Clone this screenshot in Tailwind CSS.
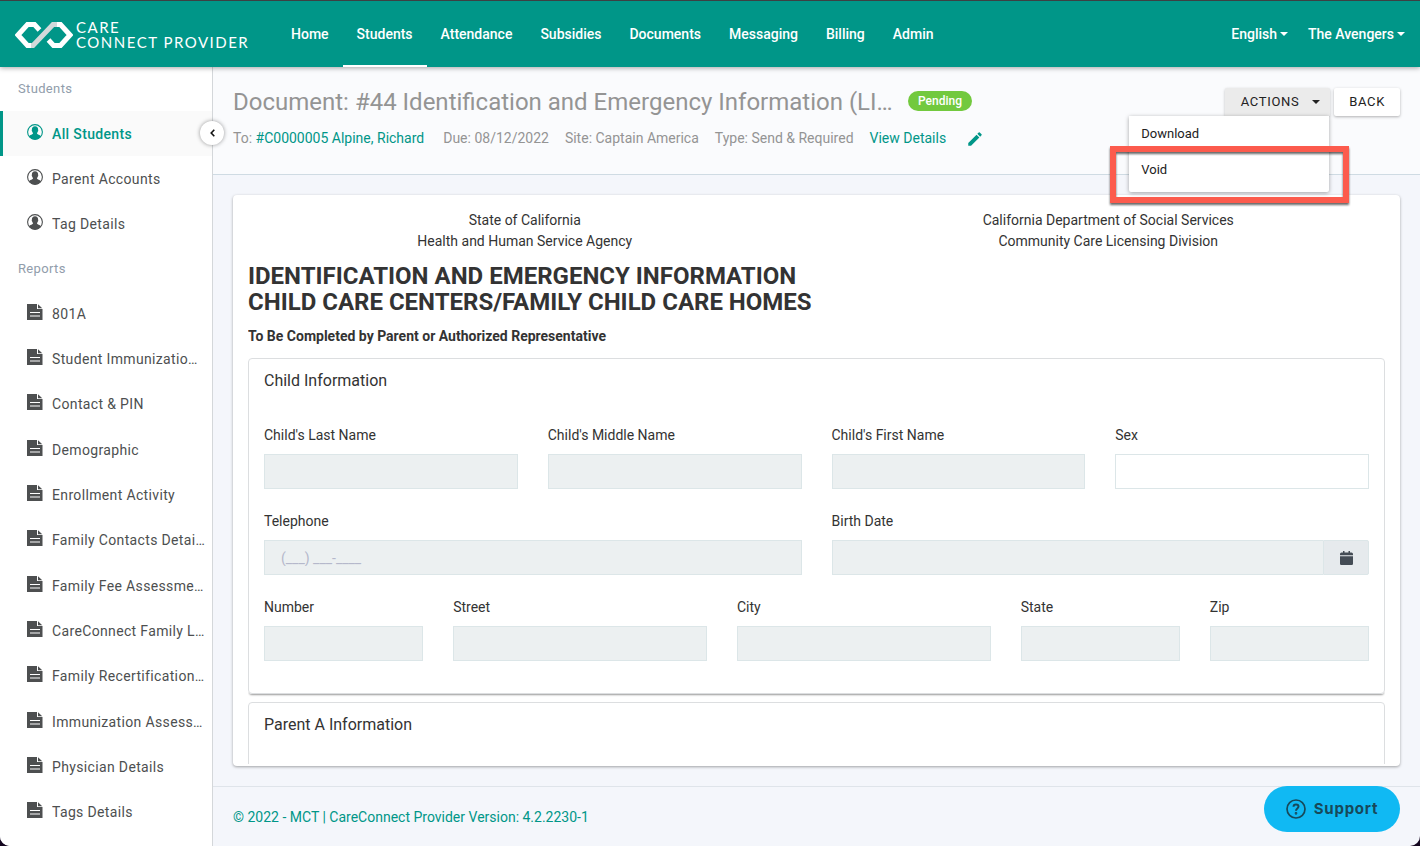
<!DOCTYPE html>
<html lang="en">
<head>
    <meta charset="UTF-8">
    <meta name="viewport" content="width=device-width, initial-scale=1.0">
    <title>CareConnect Provider - Document #44</title>
    <script src="https://cdn.jsdelivr.net/npm/@tailwindcss/browser@4"></script>
</head>
<body class="bg-[#14061f] font-[Roboto,sans-serif] text-sm text-[#333]">
    <svg class="hidden">
        <symbol id="icon-user" viewBox="0 0 16 16">
            <circle cx="8" cy="8" r="7.4" fill="none" stroke="currentColor" stroke-width="1.1"/>
            <path fill="currentColor" d="M8 2.2c2.100 0 3.200 1.400 3.100 3.200 0 .5.3.6.1 1.300-.1.6-.5.8-.6 1.200-.2.7-.6.9-.6 1.400 0 1.400 3.200 1.300 4.200 3.300A7.400 7.400 0 0 1 8 15.500a7.400 7.400 0 0 1-6.200-2.900C2.800 10.600 6 10.700 6 9.300c0-.5-.4-.7-.6-1.400-.1-.4-.5-.6-.6-1.200-.2-.7.100-.8.100-1.300-.1-1.800 1-3.200 3.100-3.200z"/>
        </symbol>
        <symbol id="icon-doc" viewBox="0 0 16 16">
            <path fill="currentColor" fill-rule="evenodd" d="M0 0H10v5h5.500v11H0zM3 8v1h10V8zm0 3.500v1h10v-1z"/>
            <path fill="currentColor" d="M11 .2 15.300 4.200H11z"/>
        </symbol>
        <symbol id="icon-caret" viewBox="0 0 8 4">
            <path fill="currentColor" d="M0 0h8L4 4z"/>
        </symbol>
    </svg>

    <div class="flex h-screen flex-col overflow-hidden rounded-b-[10px] bg-[#f4f6fb]">
        <!-- top bar -->
        <header class="relative z-10 flex h-[67px] shrink-0 items-stretch border-t border-[#3c4043] bg-[#009688] pr-[15px] pl-[15px] text-white shadow-[0_1px_5px_rgba(0,0,0,0.35)]">
            <a href="#" class="flex w-[262px] items-center gap-[3px] pt-[2px]" aria-label="Care Connect Provider">
                <svg class="h-[26px] w-[58px]" viewBox="0 0 58 26" fill="none" stroke-width="5">
                    <path stroke="#d2d9da" d="M14 23.500h4L38 2.500h5"/>
                    <path stroke="#fff" d="M24.500 8 19.500 2.500h-7L3 13l9.500 10.500H16"/>
                    <path stroke="#fff" d="M33.500 18l5 5.500h7L55 13 45.500 2.500H42"/>
                </svg>
                <span class="font-[Lato,sans-serif] text-[15px] leading-[15px] whitespace-nowrap tracking-widest">CARE<br>CONNECT PROVIDER</span>
            </a>
            <nav class="flex font-medium">
                <a href="#" class="flex items-center px-[14px]">Home</a>
                <a href="#" class="flex items-center border-y-2 border-t-transparent border-b-white px-[14px]">Students</a>
                <a href="#" class="flex items-center px-[14px]">Attendance</a>
                <a href="#" class="flex items-center px-[14px]">Subsidies</a>
                <a href="#" class="flex items-center px-[14px]">Documents</a>
                <a href="#" class="flex items-center px-[14px]">Messaging</a>
                <a href="#" class="flex items-center px-[14px]">Billing</a>
                <a href="#" class="flex items-center px-[14px]">Admin</a>
            </nav>
            <div class="ml-auto flex gap-5 font-medium">
                <button type="button" class="flex items-center gap-[3px]">English <svg class="h-1 w-2"><use href="#icon-caret"/></svg></button>
                <button type="button" class="flex items-center gap-[3px]">The Avengers <svg class="h-1 w-2"><use href="#icon-caret"/></svg></button>
            </div>
        </header>

        <div class="flex min-h-0 flex-1">
            <!-- sidebar -->
            <aside class="relative w-[213px] shrink-0 border-r border-[#d4d7da] bg-white">
                <nav class="flex h-full flex-col pb-[11px] tracking-wide text-[#4d4f50]">
                    <h2 class="flex h-11 shrink-0 items-center pl-[18px] text-[13px] text-[#919dab]">Students</h2>
                    <ul class="flex flex-[3] flex-col">
                        <li class="flex flex-1"><a href="#" class="flex min-w-0 flex-1 items-center gap-[9px] border-l-3 border-[#009688] bg-[#fafafa] pr-[7px] pl-6 font-medium text-[#009688]"><svg class="mb-1 size-4 shrink-0"><use href="#icon-user"/></svg><span class="truncate">All Students</span></a></li>
                        <li class="flex flex-1"><a href="#" class="flex min-w-0 flex-1 items-center gap-[9px] pr-[7px] pl-[27px]"><svg class="mb-1 size-4 shrink-0"><use href="#icon-user"/></svg><span class="truncate">Parent Accounts</span></a></li>
                        <li class="flex flex-1"><a href="#" class="flex min-w-0 flex-1 items-center gap-[9px] pr-[7px] pl-[27px]"><svg class="mb-1 size-4 shrink-0"><use href="#icon-user"/></svg><span class="truncate">Tag Details</span></a></li>
                    </ul>
                    <h2 class="flex h-11 shrink-0 items-center pl-[18px] text-[13px] text-[#919dab]">Reports</h2>
                    <ul class="flex flex-[12] flex-col">
                        <li class="flex flex-1"><a href="#" class="flex min-w-0 flex-1 items-center gap-[9px] pr-[7px] pl-[27px]"><svg class="mb-1 size-4 shrink-0"><use href="#icon-doc"/></svg><span class="truncate">801A</span></a></li>
                        <li class="flex flex-1"><a href="#" class="flex min-w-0 flex-1 items-center gap-[9px] pr-[7px] pl-[27px]"><svg class="mb-1 size-4 shrink-0"><use href="#icon-doc"/></svg><span class="truncate">Student Immunization Records</span></a></li>
                        <li class="flex flex-1"><a href="#" class="flex min-w-0 flex-1 items-center gap-[9px] pr-[7px] pl-[27px]"><svg class="mb-1 size-4 shrink-0"><use href="#icon-doc"/></svg><span class="truncate">Contact &amp; PIN</span></a></li>
                        <li class="flex flex-1"><a href="#" class="flex min-w-0 flex-1 items-center gap-[9px] pr-[7px] pl-[27px]"><svg class="mb-1 size-4 shrink-0"><use href="#icon-doc"/></svg><span class="truncate">Demographic</span></a></li>
                        <li class="flex flex-1"><a href="#" class="flex min-w-0 flex-1 items-center gap-[9px] pr-[7px] pl-[27px]"><svg class="mb-1 size-4 shrink-0"><use href="#icon-doc"/></svg><span class="truncate">Enrollment Activity</span></a></li>
                        <li class="flex flex-1"><a href="#" class="flex min-w-0 flex-1 items-center gap-[9px] pr-[7px] pl-[27px]"><svg class="mb-1 size-4 shrink-0"><use href="#icon-doc"/></svg><span class="truncate">Family Contacts Details Report</span></a></li>
                        <li class="flex flex-1"><a href="#" class="flex min-w-0 flex-1 items-center gap-[9px] pr-[7px] pl-[27px]"><svg class="mb-1 size-4 shrink-0"><use href="#icon-doc"/></svg><span class="truncate">Family Fee Assessment</span></a></li>
                        <li class="flex flex-1"><a href="#" class="flex min-w-0 flex-1 items-center gap-[9px] pr-[7px] pl-[27px]"><svg class="mb-1 size-4 shrink-0"><use href="#icon-doc"/></svg><span class="truncate">CareConnect Family Logins</span></a></li>
                        <li class="flex flex-1"><a href="#" class="flex min-w-0 flex-1 items-center gap-[9px] pr-[7px] pl-[27px]"><svg class="mb-1 size-4 shrink-0"><use href="#icon-doc"/></svg><span class="truncate">Family Recertification Details</span></a></li>
                        <li class="flex flex-1"><a href="#" class="flex min-w-0 flex-1 items-center gap-[9px] pr-[7px] pl-[27px]"><svg class="mb-1 size-4 shrink-0"><use href="#icon-doc"/></svg><span class="truncate">Immunization Assessment</span></a></li>
                        <li class="flex flex-1"><a href="#" class="flex min-w-0 flex-1 items-center gap-[9px] pr-[7px] pl-[27px]"><svg class="mb-1 size-4 shrink-0"><use href="#icon-doc"/></svg><span class="truncate">Physician Details</span></a></li>
                        <li class="flex flex-1"><a href="#" class="flex min-w-0 flex-1 items-center gap-[9px] pr-[7px] pl-[27px]"><svg class="mb-1 size-4 shrink-0"><use href="#icon-doc"/></svg><span class="truncate">Tags Details</span></a></li>
                    </ul>
                </nav>
                <button type="button" aria-label="Collapse menu" class="absolute top-[54px] -right-3 z-10 flex size-6 items-center justify-center rounded-full bg-white shadow-[0_0_4px_rgba(0,0,0,0.4)]">
                    <svg class="h-2 w-[5px]" viewBox="0 0 5 8" fill="none" stroke="#111" stroke-width="1.6"><path d="M4.300.8 1.200 4l3.100 3.200"/></svg>
                </button>
            </aside>

            <main class="flex min-w-0 flex-1 flex-col">
                <!-- document header -->
                <div class="flex h-[108px] shrink-0 items-start justify-between border-b border-[#cfdbe3] bg-[#fafbfd] pr-5 pl-5 text-[#949494]">
                    <div class="min-w-0 pt-5">
                        <div class="flex items-center gap-[11px]">
                            <h1 class="w-[664px] truncate text-2xl leading-[30px]">Document: #44 Identification and Emergency Information (LIC 700)</h1>
                            <span class="mb-[2px] rounded-full bg-[#72c93e] px-[10px] text-xs leading-5 font-medium text-white">Pending</span>
                        </div>
                        <div class="mt-[11px] flex items-center gap-4 leading-[21px]">
                            <span class="mr-[3px]">To: <a href="#" class="text-[#009688]">#C0000005 Alpine, Richard</a></span>
                            <span>Due: 08/12/2022</span>
                            <span>Site: Captain America</span>
                            <span>Type: Send &amp; Required</span>
                            <a href="#" class="text-[#009688]">View Details</a>
                            <button type="button" aria-label="Edit" class="ml-1 text-[#009688]">
                                <svg class="size-[18px]" viewBox="0 0 24 24" fill="currentColor"><path d="M3 17.250V21h3.750L17.810 9.940l-3.750-3.750L3 17.250zM20.710 7.040a1 1 0 0 0 0-1.410l-2.340-2.340a1 1 0 0 0-1.410 0l-1.830 1.830 3.750 3.750 1.830-1.830z"/></svg>
                            </button>
                        </div>
                    </div>
                    <div class="flex gap-1 pt-[21px] text-[13px] text-[#222]">
                        <div class="relative">
                            <button type="button" class="flex h-7 items-center gap-[13px] rounded-t-xs bg-[#ebebeb] pr-[10px] pl-4 tracking-wider shadow-[0_1px_3px_rgba(0,0,0,0.25)]">ACTIONS <svg class="h-1 w-2"><use href="#icon-caret"/></svg></button>
                            <ul class="absolute top-7 right-px z-20 flex h-[76px] w-[200px] flex-col rounded-b-xs bg-white shadow-[0_1px_4px_rgba(0,0,0,0.35)]">
                                <li><a href="#" class="block px-3 leading-9">Download</a></li>
                                <li><a href="#" class="block px-3 leading-9">Void</a></li>
                            </ul>
                            <div class="pointer-events-none absolute top-[58px] -right-[19px] z-30 h-[57px] w-[239px] border-6 border-[#fc5b4d] drop-shadow-[0_2px_1px_rgba(0,0,0,0.6)]"></div>
                        </div>
                        <button type="button" class="h-7 rounded-xs bg-white px-[15px] tracking-wider shadow-[0_1px_3px_rgba(0,0,0,0.3)]">BACK</button>
                    </div>
                </div>

                <!-- form card -->
                <section class="mx-5 mt-5 mb-5 min-h-0 flex-1 overflow-hidden rounded bg-white px-[15px] pt-[15px] pb-[2px] shadow-[0_1px_3px_rgba(0,0,0,0.35)]">
                    <div class="h-full overflow-hidden">
                        <div class="grid grid-cols-2 gap-[30px] text-center leading-[21px]">
                            <p>State of California<br>Health and Human Service Agency</p>
                            <p>California Department of Social Services<br>Community Care Licensing Division</p>
                        </div>
                        <h2 class="mt-[11px] text-2xl leading-[26px] font-bold">IDENTIFICATION AND EMERGENCY INFORMATION<br>CHILD CARE CENTERS/FAMILY CHILD CARE HOMES</h2>
                        <p class="mt-[11px] leading-[21px] font-bold">To Be Completed by Parent or Authorized Representative</p>

                        <fieldset class="mt-[11px] h-[336px] rounded border border-[#dcdee0] px-[15px] shadow-[0_2px_2px_-1px_rgba(0,0,0,0.4)]">
                            <h3 class="pt-[10px] text-base">Child Information</h3>
                            <div class="mt-8 grid grid-cols-12 gap-x-[30px] gap-y-[22px]">
                                <div class="col-span-3">
                                    <label for="lastName" class="block leading-[21px]">Child's Last Name</label>
                                    <input type="text" id="lastName" class="mt-2 block h-[35px] w-full border border-[#dce6e8] bg-[#ecf0f1] px-4" disabled>
                                </div>
                                <div class="col-span-3">
                                    <label for="middleName" class="block leading-[21px]">Child's Middle Name</label>
                                    <input type="text" id="middleName" class="mt-2 block h-[35px] w-full border border-[#dce6e8] bg-[#ecf0f1] px-4" disabled>
                                </div>
                                <div class="col-span-3">
                                    <label for="firstName" class="block leading-[21px]">Child's First Name</label>
                                    <input type="text" id="firstName" class="mt-2 block h-[35px] w-full border border-[#dce6e8] bg-[#ecf0f1] px-4" disabled>
                                </div>
                                <div class="col-span-3">
                                    <label for="sex" class="block leading-[21px]">Sex</label>
                                    <select id="sex" class="mt-2 block h-[35px] w-full appearance-none border border-[#dce6e8] bg-white px-4">
                                        <option></option>
                                    </select>
                                </div>
                                <div class="col-span-6">
                                    <label for="telephone" class="block leading-[21px]">Telephone</label>
                                    <input type="text" id="telephone" placeholder="(___) ___-____" class="mt-2 block h-[35px] w-full border border-[#dce6e8] bg-[#ecf0f1] px-4 placeholder:text-[#b5b8cb]" disabled>
                                </div>
                                <div class="col-span-6">
                                    <label for="birthDate" class="block leading-[21px]">Birth Date</label>
                                    <div class="mt-2 flex h-[35px]">
                                        <input type="text" id="birthDate" class="min-w-0 flex-1 border border-r-0 border-[#dce6e8] bg-[#ecf0f1] px-4" disabled>
                                        <button type="button" aria-label="Pick date" class="flex w-[46px] items-center justify-center rounded-r-xs border border-[#dce6e8] bg-[#e6eaed] text-[#444c55]">
                                            <svg class="h-[14px] w-[13px]" viewBox="0 0 13 14" fill="currentColor"><path d="M3 0h1.500v1.500h4V0H10v1.500h1.500A1.500 1.500 0 0 1 13 3v1.300H0V3a1.500 1.500 0 0 1 1.500-1.500H3zM0 5.200h13v7.600a1.200 1.200 0 0 1-1.200 1.200H1.200A1.200 1.200 0 0 1 0 12.800z"/></svg>
                                        </button>
                                    </div>
                                </div>
                                <div class="col-span-2">
                                    <label for="number" class="block leading-[21px]">Number</label>
                                    <input type="text" id="number" class="mt-2 block h-[35px] w-full border border-[#dce6e8] bg-[#ecf0f1] px-4" disabled>
                                </div>
                                <div class="col-span-3">
                                    <label for="street" class="block leading-[21px]">Street</label>
                                    <input type="text" id="street" class="mt-2 block h-[35px] w-full border border-[#dce6e8] bg-[#ecf0f1] px-4" disabled>
                                </div>
                                <div class="col-span-3">
                                    <label for="city" class="block leading-[21px]">City</label>
                                    <input type="text" id="city" class="mt-2 block h-[35px] w-full border border-[#dce6e8] bg-[#ecf0f1] px-4" disabled>
                                </div>
                                <div class="col-span-2">
                                    <label for="state" class="block leading-[21px]">State</label>
                                    <input type="text" id="state" class="mt-2 block h-[35px] w-full border border-[#dce6e8] bg-[#ecf0f1] px-4" disabled>
                                </div>
                                <div class="col-span-2">
                                    <label for="zip" class="block leading-[21px]">Zip</label>
                                    <input type="text" id="zip" class="mt-2 block h-[35px] w-full border border-[#dce6e8] bg-[#ecf0f1] px-4" disabled>
                                </div>
                            </div>
                        </fieldset>

                        <fieldset class="mt-2 h-[336px] rounded border border-[#dcdee0] px-[15px]">
                            <h3 class="pt-[10px] text-base">Parent A Information</h3>
                        </fieldset>
                    </div>
                </section>

                <footer class="flex h-[60px] shrink-0 items-center justify-between border-t border-[#dfe4ea] pr-5 pl-5">
                    <a href="#" class="text-[#009688]">© 2022 - MCT | CareConnect Provider Version: 4.2.2230-1</a>
                    <button type="button" class="mb-4 flex h-[46px] w-[136px] items-center justify-center gap-2 rounded-full bg-[#10b9f3] font-[Inter,sans-serif] text-[15px] font-bold tracking-wider text-[#17495a]">
                        <svg class="size-5" viewBox="0 0 20 20" fill="none" stroke="currentColor" stroke-width="1.700"><circle cx="10" cy="10" r="9"/><path d="M7.500 7.800c0-1.500 1.100-2.400 2.500-2.400s2.500.9 2.500 2.200c0 1.900-2.500 1.900-2.500 4.100" stroke-width="2"/><circle cx="10" cy="14.300" r=".5"/></svg>
                        Support
                    </button>
                </footer>
            </main>
        </div>
    </div>
</body>
</html>
